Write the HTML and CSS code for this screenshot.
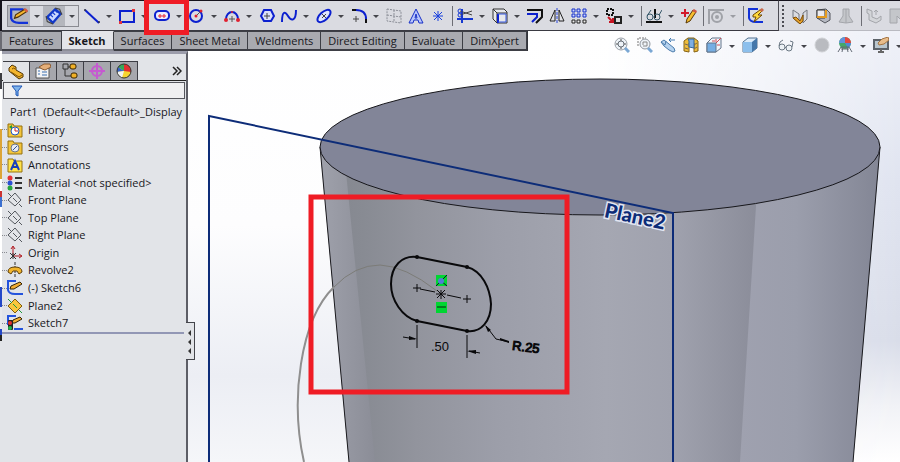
FILE: index.html
```html
<!DOCTYPE html>
<html lang="en">
<head>
<meta charset="utf-8">
<title>Part1 - Sketch</title>
<link rel="stylesheet" href="styles.css">
</head>
<body>
<div class="app">
<header class="toolbars">
<div class="toolbar main-tools" role="toolbar" aria-label="Sketch tools">
  <div class="pressed-group">
    <button class="tool pressed" aria-label="Exit sketch"><svg viewBox="0 0 16 16"><path d="M12 2H1v8q1 4 7 4h8" fill="none" stroke="#1232d8" stroke-width="2"/><path d="M4 10l1-3 8-5 2 2-8 5z" fill="#f6b62c" stroke="#4e3109"/><path d="M12 2l2-1 2 2-1 2z" fill="#d85b45"/></svg></button><button class="arrow" aria-label="Exit sketch options"></button>
    <button class="tool pressed" aria-label="Smart dimension"><svg viewBox="0 0 16 16"><path d="M2 9l7-7 5 4-7 8z" fill="#cbd8ff" stroke="#1238c8" stroke-width="2"/><path d="M5 7l2 2M7 5l2 2M9 3l2 2" stroke="#1238c8"/><path d="M1 8l1 5 5 2M9 1l4 1 2 5" fill="none" stroke="#444"/></svg></button><button class="arrow" aria-label="Dimension options"></button>
  </div>
  <button class="tool" aria-label="Line"><svg viewBox="0 0 16 16"><path d="M1 2l14 13" stroke="#0c20cf" stroke-width="2"/><circle cx="1" cy="2" r="1" fill="#334"/><circle cx="15" cy="14" r="1" fill="#334"/></svg></button><button class="arrow" aria-label="Line options"></button>
  <button class="tool" aria-label="Corner rectangle"><svg viewBox="0 0 16 16"><path d="M1 3h14v11H1z" fill="none" stroke="#0c20cf" stroke-width="2"/><path d="M0 13h3v3H0zM13 1h3v3h-3z" fill="#e5343c"/></svg></button><button class="arrow" aria-label="Rectangle options"></button>
  <div class="highlighted"><button class="tool" aria-label="Straight slot"><svg viewBox="0 0 16 16"><rect x="1" y="3" width="14" height="9" rx="4" fill="#eef" stroke="#0c20cf" stroke-width="2"/><path d="M5 7h2v2H5zM9 7h2v2H9z" fill="#fff" stroke="#e02030"/></svg></button><button class="arrow" aria-label="Slot options"></button></div>
  <button class="tool" aria-label="Circle"><svg viewBox="0 0 16 16"><circle cx="7" cy="8" r="6" fill="none" stroke="#0c20cf" stroke-width="2"/><path d="M7 8l4-4" stroke="#555"/><circle cx="7" cy="8" r="1.500" fill="#e02030"/><circle cx="12" cy="3" r="1.500" fill="#e02030"/></svg></button><button class="arrow" aria-label="Circle options"></button>
  <button class="tool" aria-label="Centerpoint arc"><svg viewBox="0 0 16 16"><path d="M2 11a6 7 0 0 1 12 0" fill="none" stroke="#0c20cf" stroke-width="2"/><path d="M8 8v6M5 11h6" stroke="#555"/><circle cx="2" cy="12" r="2" fill="#e02030"/><circle cx="14" cy="12" r="2" fill="#e02030"/><circle cx="8" cy="4" r="1" fill="#e02030"/></svg></button><button class="arrow" aria-label="Arc options"></button>
  <button class="tool" aria-label="Polygon"><svg viewBox="0 0 16 16"><path d="M5 2h7l3 6-3 5H5L2 8z" fill="#dbe1fb" stroke="#0c20cf" stroke-width="2"/><path d="M8 5v6M5 8h6" stroke="#444"/></svg></button>
  <button class="tool" aria-label="Spline"><svg viewBox="0 0 16 16"><path d="M1 14C1 3 4 3 7 8s8 6 8-6" fill="none" stroke="#0c20cf" stroke-width="2"/></svg></button><button class="arrow" aria-label="Spline options"></button>
  <button class="tool" aria-label="Ellipse"><svg viewBox="0 0 16 16"><ellipse cx="8" cy="8" rx="8" ry="4" transform="rotate(-42 8 8)" fill="#e1e6fb" stroke="#0c20cf" stroke-width="2"/><path d="M6 6l4 4M10 6l-4 4" stroke="#444"/></svg></button><button class="arrow" aria-label="Ellipse options"></button>
  <button class="tool" aria-label="Sketch fillet"><svg viewBox="0 0 16 16"><path d="M1 2h5M15 10v5" stroke="#111" stroke-width="2"/><path d="M5 2q10 0 10 9" fill="none" stroke="#0c20cf" stroke-width="2"/><path d="M5 8v6M2 11h6" stroke="#444"/></svg></button><button class="arrow" aria-label="Fillet options"></button>
  <button class="tool" aria-label="Plane"><svg viewBox="0 0 16 16"><path d="M1 1l14 2v12L1 13zM8 2v12M1 7l14 2" fill="none" stroke="#8c8f98" stroke-dasharray="2 1"/></svg></button>
  <button class="tool" aria-label="Text"><svg viewBox="0 0 16 16"><path d="M8 1L1 15h4l1-3h4l1 3h4zM8 6l1 4H7z" fill="#b9c6fb" stroke="#1730c8"/></svg></button>
  <button class="tool" aria-label="Point"><svg viewBox="0 0 16 16"><path d="M8 3v10M3 8h10M4 4l8 8M12 4l-8 8" stroke="#1940de"/></svg></button>
  <i class="sep"></i>
  <button class="tool" aria-label="Trim entities"><svg viewBox="0 0 16 16"><path d="M0 11h16M5 1v14" stroke="#1638d0" stroke-width="2"/><path d="M3 3l12 4M3 7l12-4" stroke="#444" stroke-width="1"/><circle cx="3" cy="3" r="2" fill="none" stroke="#1638d0"/><circle cx="3" cy="7" r="2" fill="none" stroke="#1638d0"/></svg></button><button class="arrow" aria-label="Trim options"></button>
  <button class="tool" aria-label="Convert entities"><svg viewBox="0 0 16 16"><path d="M1 1h11l3 3v11H5L1 11z" fill="#e7e8ec" stroke="#333"/><path d="M1 1l4 4h10M5 5v10" fill="none" stroke="#333"/><path d="M6 6v9" stroke="#0c20cf" stroke-width="2"/><path d="M6 6h8v8H6" fill="none" stroke="#3658e0"/></svg></button><button class="arrow" aria-label="Convert options"></button>
  <button class="tool" aria-label="Offset entities"><svg viewBox="0 0 16 16"><path d="M0 2h15v7l-6 6" fill="none" stroke="#111" stroke-width="2"/><path d="M0 6h10v3l-5 5" fill="none" stroke="#0c20cf" stroke-width="2"/></svg></button>
  <button class="tool" aria-label="Mirror entities"><svg viewBox="0 0 16 16"><path d="M6 2v11H1zM10 2v11h5z" fill="#e1e2e7" stroke="#222"/><path d="M8 0v16" stroke="#2844d8" stroke-dasharray="3 1"/></svg></button>
  <button class="tool" aria-label="Linear sketch pattern"><svg viewBox="0 0 16 16"><path d="M1 1h3v3H1zM6 1h3v3H6zM12 1h3v3h-3zM1 6h3v3H1zM6 6h3v3H6zM12 6h3v3h-3z" fill="#cbd5ff" stroke="#1730c8"/><path d="M1 12h3v3H1zM6 12h3v3H6zM12 12h3v3h-3z" fill="#eee" stroke="#222"/></svg></button><button class="arrow" aria-label="Pattern options"></button>
  <button class="tool" aria-label="Move entities"><svg viewBox="0 0 16 16"><path d="M1 1h6v6H1z" fill="none" stroke="#111" stroke-width="2" stroke-dasharray="2 1"/><path d="M9 9h6v6H9z" fill="#ddd" stroke="#222" stroke-width="2"/><path d="M2 9l4 4M3 14h4v-4" fill="none" stroke="#c71422" stroke-width="2"/></svg></button><button class="arrow" aria-label="Move options"></button>
  <i class="sep"></i>
  <button class="tool" aria-label="Display relations"><svg viewBox="0 0 16 16"><path d="M0 14h16M9 1v9" stroke="#111" stroke-width="2"/><circle cx="4" cy="9" r="3" fill="none" stroke="#345668"/><circle cx="11" cy="9" r="3" fill="none" stroke="#345668"/><path d="M1 8l4-6M13 7l3-5" stroke="#345668"/></svg></button><button class="arrow" aria-label="Relation options"></button>
  <button class="tool" aria-label="Repair sketch"><svg viewBox="0 0 16 16"><path d="M4 1v8M0 5h8" stroke="#d21a2a" stroke-width="2"/><path d="M5 15l1-4 6-9 3 2-6 9z" fill="#f6bd2e" stroke="#573706"/><path d="M11 3l2-2 3 2-1 2z" fill="#cf5945"/></svg></button>
  <i class="sep"></i>
  <button class="tool" aria-label="Quick snaps" disabled><svg viewBox="0 0 16 16"><path d="M0 2h16M1 1v15" stroke="#a0a2a8" stroke-width="2"/><circle cx="9" cy="9" r="5" fill="none" stroke="#a0a2a8" stroke-width="2"/><circle cx="9" cy="9" r="2" fill="#a0a2a8"/></svg></button><button class="arrow" aria-label="Snap options" disabled></button>
  <i class="sep"></i>
  <button class="tool" aria-label="Rapid sketch"><svg viewBox="0 0 16 16"><path d="M10 1H1v9q1 4 7 4h7" fill="none" stroke="#1232d8" stroke-width="2"/><path d="M5 7l7-5 2 1-4 4h4l-8 7 2-5H5z" fill="#ffd83b" stroke="#6f4700"/><path d="M11 2l3-2 2 2-2 2z" fill="#c86a4c"/></svg></button>
</div>
<div class="toolbar side-tools" role="toolbar" aria-label="Sheet metal tools">
  <i class="grip"></i>
  <button class="tool" aria-label="Base flange"><svg viewBox="0 0 16 16"><path d="M1 2l6 4v9L1 10zM11 5l4-3v9l-4 4z" fill="#d9dbe1" stroke="#73767e"/><path d="M1 10l3-1 4 4 3-6v6l-3 3z" fill="#e4a12b" stroke="#80500b"/></svg></button>
  <button class="tool" aria-label="Convert to sheet metal"><svg viewBox="0 0 16 16"><path d="M2 2l9-1 4 4v7l-5 3-8-5z" fill="#b6b9c2" stroke="#54575e"/><path d="M2 2h8v8H2z" fill="#ececf0" stroke="#333"/><path d="M2 9h9V2" fill="none" stroke="#e49c23" stroke-width="2"/></svg></button>
  <button class="tool" aria-label="Lofted bend" disabled><svg viewBox="0 0 16 16"><path d="M5 1h6v7l4 6-7 1-7-1 4-6zM8 1v14" fill="#c4c6ca" stroke="#a4a6ab"/></svg></button>
  <i class="sep"></i>
  <button class="tool" aria-label="Edge flange" disabled><svg viewBox="0 0 16 16"><path d="M1 1l5 2v6l5 2 4-3v4l-5 3-7-3V6L1 5z" fill="#d3d5d9" stroke="#a4a6ab"/><path d="M10 7V2M8 4l2-2 2 2" fill="none" stroke="#a4a6ab"/></svg></button>
  <button class="tool" aria-label="Miter flange" disabled><svg viewBox="0 0 16 16"><path d="M1 1h14v14L8 8v7H1z" fill="#c4c6ca" stroke="#a4a6ab"/></svg></button>
</div>
</header>

<div class="stage">
<main class="viewport">
<svg class="model" viewBox="0 31 900 431" preserveAspectRatio="xMinYMin slice" role="img" aria-label="Revolved part with slot sketch">
  <defs>
    <linearGradient id="sky" x1="0" y1="0" x2="0" y2="1"><stop offset="0" stop-color="#fff"/><stop offset=".45" stop-color="#fdfdfe"/><stop offset=".8" stop-color="#eceef4"/><stop offset="1" stop-color="#f5f6f9"/></linearGradient>
    <linearGradient id="haze" x1="0" y1="0" x2="0" y2="1"><stop offset="0" stop-color="#eff1f8"/><stop offset=".35" stop-color="#e0e4f0"/><stop offset=".72" stop-color="#d9dde9"/><stop offset=".87" stop-color="#f1f2f6"/><stop offset="1" stop-color="#fff"/></linearGradient>
    <linearGradient id="fade"><stop offset="0" stop-color="#000"/><stop offset="1" stop-color="#fff"/></linearGradient>
    <mask id="right"><rect x="600" y="31" width="300" height="431" fill="url(#fade)"/></mask>
    <linearGradient id="wall" gradientUnits="userSpaceOnUse" x1="320" y1="0" x2="760" y2="0"><stop offset="0" stop-color="#83868e"/><stop offset=".1" stop-color="#888b93"/><stop offset=".22" stop-color="#92949d"/><stop offset=".4" stop-color="#9c9ea9"/><stop offset=".65" stop-color="#a5a7b2"/><stop offset=".8" stop-color="#a0a2ae"/><stop offset="1" stop-color="#8a8c99"/></linearGradient>
    <linearGradient id="left" gradientUnits="userSpaceOnUse" x1="320" y1="0" x2="375" y2="0"><stop offset="0" stop-color="#9fa1ab"/><stop offset="1" stop-color="#8b8d97"/></linearGradient>
    <linearGradient id="facet" gradientUnits="userSpaceOnUse" x1="740" y1="0" x2="880" y2="0"><stop offset="0" stop-color="#9fa1af"/><stop offset=".4" stop-color="#9b9eac"/><stop offset="1" stop-color="#838695"/></linearGradient>
  </defs>
  <rect y="31" width="900" height="431" fill="url(#sky)"/>
  <rect x="600" y="31" width="300" height="431" fill="url(#haze)" mask="url(#right)"/>
  <path d="M320 147L349 462H853L880 147z" fill="url(#wall)"/>
  <path d="M320 147L349 462H375L346 172z" fill="url(#left)"/>
  <path d="M757 190L740 462H853L880 147z" fill="url(#facet)"/>
  <path d="M320 147L349 462M880 147L853 462" stroke="#1a1a1e"/>
  <ellipse cx="600" cy="147" rx="280" ry="68" fill="#828598" stroke="#17171b"/>
  <path d="M209 462V116L673 213V462" fill="none" stroke="#0d2c78" stroke-width="2"/>
  <path d="M304 462C290 400 300 320 334 287" fill="none" stroke="#8f8f8f" stroke-width="2"/>
  <path d="M334 287Q355 265 380 265Q405 266 437 291" fill="none" stroke="#7c7c78"/>
  <path d="M417 257L467 267C482 271 490 288 491 304C491 321 481 333 467 331L417 321C402 317 391 300 391 284C391 266 402 255 417 257z" fill="none" stroke="#09090b" stroke-width="2"/>
  <g fill="#09090b"><circle cx="417" cy="257" r="2"/><circle cx="467" cy="267" r="2"/><circle cx="417" cy="321" r="2"/><circle cx="467" cy="331" r="2"/></g>
  <path d="M413 288h8M417 284v8M463 299h8M467 295v8M420 289l15 3M447 295l14 3M441 290v9M436 294h10M437 290l8 8M445 290l-8 8M417 325v23M467 335v23M403 337l12 2M469 351l11 2M486 326l10 13 13 3" fill="none" stroke="#09090b"/>
  <path d="M417 339l-8-3v4zM467 351l9 3v-4zM485 325l3 7 3-2zM500 338l9 3v2l-9-3z" fill="#09090b"/>
  <rect x="436" y="275" width="11" height="11" fill="#00d632"/><path d="M436 286l11-11M440 280l7 6" stroke="#101426"/><circle cx="441" cy="281" r="3" fill="#527cd4"/>
  <rect x="436" y="302" width="11" height="11" fill="#00d632"/><path d="M437 307h9" stroke="#08220c"/>
  <text class="dim" x="431" y="351">.50</text>
  <text class="dim radius" transform="rotate(7 513 348)" x="512" y="350">R.25</text>
  <text class="plane-label" transform="rotate(12 604 215)" x="604" y="217">Plane2</text>
  <rect x="311" y="197" width="256" height="195" fill="none" stroke="#ef1c25" stroke-width="5"/>
</svg>
</main>

<nav class="tabs" aria-label="Command manager">
  <button>Features</button><button class="active">Sketch</button><button>Surfaces</button><button>Sheet Metal</button><button>Weldments</button><button>Direct Editing</button><button>Evaluate</button><button>DimXpert</button>
</nav>

<div class="hud" role="toolbar" aria-label="View tools">
  <button class="tool" aria-label="Zoom to fit"><svg viewBox="0 0 16 16"><circle cx="7" cy="7" r="6" fill="#eef3f8" stroke="#999fa7"/><circle cx="7" cy="7" r="3" fill="none" stroke="#676f78"/><path d="M7 2v2M7 10v2M2 7h2M10 7h2" stroke="#555"/><path d="M11 11l4 4" stroke="#7aa7d3" stroke-width="3"/></svg></button>
  <button class="tool" aria-label="Zoom to area"><svg viewBox="0 0 16 16"><path d="M1 9V1h8" fill="none" stroke="#777" stroke-dasharray="2 1"/><circle cx="8" cy="7" r="5" fill="#eef3f8" stroke="#91979f"/><path d="M6 8V5h4v4H6" fill="none" stroke="#888"/><path d="M11 11l4 4" stroke="#7aa7d3" stroke-width="3"/></svg></button>
  <button class="tool" aria-label="Previous view"><svg viewBox="0 0 16 16"><path d="M1 5l3-2 5 4 5 4 1 3-2 1-4-2-5-4z" fill="#b5d2ef" stroke="#4c7dac"/><path d="M1 5l4 3 1-4" fill="none" stroke="#4c7dac"/><path d="M15 3H9M11 1L9 3l2 2" fill="none" stroke="#4079b1" stroke-width="1"/></svg></button>
  <button class="tool" aria-label="Section view"><svg viewBox="0 0 16 16"><path d="M1 4l4-3h6l4 3v10l-4 1V6H6v9l-5-1z" fill="#edbc3b" stroke="#866315"/><path d="M5 2h6v9l-5-1V4z" fill="#7eaee2" stroke="#33669a"/><path d="M2 7l3 1M2 11l3 1M11 8l3-2M11 12l3-2" stroke="#765"/></svg></button>
  <button class="tool" aria-label="View orientation"><svg viewBox="0 0 16 16"><path d="M1 6l5-5h9v10l-5 4H1z" fill="#f0f6fb" stroke="#63758a"/><path d="M1 6h9v9H1z" fill="#76aee3" stroke="#63758a"/><path d="M10 6l5-5M6 4h3M11 8h3M10 2v3" stroke="#d04d55"/></svg></button><button class="arrow" aria-label="Orientation options"></button>
  <button class="tool" aria-label="Display style"><svg viewBox="0 0 16 16"><path d="M1 5l5-4h9v10l-5 4H1z" fill="#dcecfa" stroke="#52708e"/><path d="M1 5h9v10H1z" fill="#8cbfec"/><path d="M10 5l5-4v10l-5 4z" fill="#4477aa"/></svg></button><button class="arrow" aria-label="Style options"></button>
  <button class="tool" aria-label="Hide or show items"><svg viewBox="0 0 16 16"><circle cx="4" cy="10" r="3" fill="#edf2f6" stroke="#6b7884"/><circle cx="11" cy="11" r="3" fill="#edf2f6" stroke="#6b7884"/><path d="M1 9q0-5 4-6M7 10l1 1M14 10l1-5-3-1" fill="none" stroke="#6b7884"/></svg></button><button class="arrow" aria-label="Visibility options"></button>
  <button class="tool" aria-label="Edit appearance"><svg viewBox="0 0 16 16"><circle cx="8" cy="8" r="7" fill="#b9bbc0"/><circle cx="8" cy="8" r="7" fill="none" stroke="#cfd1d5"/></svg></button>
  <button class="tool" aria-label="Apply scene"><svg viewBox="0 0 16 16"><circle cx="8" cy="6" r="6" fill="#43a968"/><path d="M8 6V0a6 6 0 0 1 6 6z" fill="#e34742"/><path d="M8 6H2a6 6 0 0 1 6-6z" fill="#6490dc"/><path d="M8 6h6a6 6 0 0 1-3 5z" fill="#5587d5"/><path d="M1 15l3-5h8l3 5M4 12h8M6 10l-1 5M10 10l1 5" fill="none" stroke="#646b75"/></svg></button><button class="arrow" aria-label="Scene options"></button>
  <button class="tool" aria-label="View settings"><svg viewBox="0 0 16 16"><path d="M1 3h14v9H1z" fill="#b9c6ce" stroke="#5c6269" stroke-width="2"/><path d="M5 15h6M8 12v3" stroke="#666" stroke-width="2"/><path d="M5 6l4-4 6-2 1 3-5 4-5 1z" fill="#e8bd8b" stroke="#a47442"/></svg></button><button class="arrow" aria-label="View options"></button>
</div>

<aside class="panel">
  <div class="panel-tabs">
    <button class="active" aria-label="Feature tree"><svg viewBox="0 0 16 16"><path d="M1 4l3-3 4 2v3l7 4v3l-4 2-10-8z" fill="#f3b52d" stroke="#4f3504"/><path d="M4 5q2-2 3 0M3 8l8 5 3-2" fill="none" stroke="#7b5104"/></svg></button>
    <button aria-label="Properties"><svg viewBox="0 0 16 16"><path d="M1 5h13v10H1z" fill="#f2f3f5" stroke="#555"/><path d="M3 8h2M3 11h2M7 9h5M7 12h5" stroke="#3b6fae"/><path d="M4 4l5-3h6l1 3-6 3-3-1z" fill="#e4ae78" stroke="#8d5c32"/></svg></button>
    <button aria-label="Configurations"><svg viewBox="0 0 16 16"><path d="M1 1h5v5H1zM3 6v7h6M6 4h4" fill="none" stroke="#333"/><rect x="8" y="1" width="6" height="5" rx="2" fill="#efb027" stroke="#3a2602"/><rect x="9" y="10" width="6" height="5" rx="2" fill="#efb027" stroke="#3a2602"/></svg></button>
    <button aria-label="Dimensions"><svg viewBox="0 0 16 16"><circle cx="8" cy="8" r="5" fill="none" stroke="#c55ad0" stroke-width="2"/><path d="M8 0v16M0 8h16" stroke="#c55ad0" stroke-width="2"/></svg></button>
    <button aria-label="Display manager"><svg viewBox="0 0 16 16"><circle cx="8" cy="8" r="7" fill="#f6d430"/><path d="M8 8L2 4a7 7 0 0 1 6-3z" fill="#35a857"/><path d="M8 8V1a7 7 0 0 1 7 8z" fill="#e02e30"/><path d="M8 8l-7 1a7 7 0 0 1 1-5z" fill="#3462ce"/><path d="M8 8l-7 1a7 7 0 0 0 5 6z" fill="#f2f2f2"/><circle cx="8" cy="8" r="7" fill="none" stroke="#333"/></svg></button>
    <button class="more" aria-label="More panels"><svg viewBox="0 0 10 10"><path d="M1 1l4 4-4 4M5 1l4 4-4 4" fill="none" stroke="#222" stroke-width="1.500"/></svg></button>
  </div>
  <label class="filter"><svg viewBox="0 0 12 12"><path d="M1 1h10L7 6v5L5 10V6z" fill="#7fb4ec" stroke="#1d54b5"/></svg><input type="text" aria-label="Filter tree"></label>
  <div class="part">Part1&nbsp; (Default&lt;&lt;Default&gt;_Display</div>
  <ul class="tree">
    <li><svg viewBox="0 0 16 16"><path d="M1 2h5l1 2h8v11H1z" fill="#f4c53c" stroke="#94700e"/><circle cx="8" cy="9" r="4" fill="#fff" stroke="#2254c0"/><path d="M8 6v3h3" fill="none" stroke="#c22"/><path d="M2 5l3-2v4z" fill="#199b35"/></svg>History</li>
    <li><svg viewBox="0 0 16 16"><path d="M1 2h5l1 2h8v11H1z" fill="#f4c53c" stroke="#94700e"/><circle cx="8" cy="9" r="4" fill="#e6ebf4" stroke="#6c7481"/><path d="M6 11l4-4" stroke="#355797"/></svg>Sensors</li>
    <li><svg viewBox="0 0 16 16"><path d="M1 2h5l1 2h8v11H1z" fill="#ffe34b" stroke="#94700e"/><path d="M4 13l4-9 4 9M6 10h4" fill="none" stroke="#173fbd" stroke-width="2"/></svg>Annotations</li>
    <li><svg viewBox="0 0 16 16"><circle cx="3" cy="3" r="2.500" fill="#e23035"/><circle cx="3" cy="8" r="2.500" fill="#2b51d5"/><circle cx="3" cy="13" r="2.500" fill="#27a53e"/><path d="M8 3h7M8 8h7M8 13h7" stroke="#333" stroke-width="2"/></svg>Material &lt;not specified&gt;</li>
    <li><svg viewBox="0 0 16 16"><path d="M8 1l6 7-6 6-7-6zM1 1l3 3M12 12l3 3M6 6l4 4" fill="none" stroke="#55595f"/></svg>Front Plane</li>
    <li><svg viewBox="0 0 16 16"><path d="M8 1l6 7-6 6-7-6zM1 1l3 3M12 12l3 3M6 6l4 4" fill="none" stroke="#55595f"/></svg>Top Plane</li>
    <li><svg viewBox="0 0 16 16"><path d="M8 1l6 7-6 6-7-6zM1 1l3 3M12 12l3 3M6 6l4 4" fill="none" stroke="#55595f"/></svg>Right Plane</li>
    <li><svg viewBox="0 0 16 16"><path d="M6 11V2M4 4l2-3 2 3M6 11h8M12 9l3 2-3 2" fill="none" stroke="#b01820"/><path d="M3 8l6 6M9 8l-6 6M6 8v6" stroke="#333"/></svg>Origin</li>
    <li><svg viewBox="0 0 16 16"><path d="M8 0v16" stroke="#333" stroke-dasharray="3 1"/><path d="M1 10q0-5 7-5t7 5l-3 2-2-3H6l-2 3z" fill="#f2b42b" stroke="#60410a"/></svg>Revolve2</li>
    <li><svg viewBox="0 0 16 16"><path d="M9 1H1v9q1 4 7 4h8" fill="none" stroke="#2453dd" stroke-width="2"/><path d="M3 9l1-3 9-4 2 2-8 5z" fill="#f2ad32" stroke="#322105"/></svg>(-) Sketch6</li>
    <li><svg viewBox="0 0 16 16"><path d="M8 1l7 7-7 7-7-7z" fill="#f8c63d" stroke="#815c0b"/><path d="M1 1l4 4M12 12l3 3M6 6l4 4" stroke="#1f9b3c"/></svg>Plane2</li>
    <li><svg viewBox="0 0 16 16"><path d="M9 1H1v9M7 14h9" fill="none" stroke="#2453dd" stroke-width="2"/><path d="M5 8l1-3 7-3 2 2-7 4z" fill="#f2ad32" stroke="#322105"/><rect x="1" y="5" width="5" height="10" rx="1" fill="#222"/><circle cx="3" cy="8" r="2" fill="#e53030"/><circle cx="3" cy="13" r="2" fill="#20b44c"/></svg>Sketch7</li>
  </ul>
  <button class="splitter" aria-label="Collapse panel"><svg viewBox="0 0 6 36"><path d="M5 7v6L2 10zM5 16v6l-3-3zM5 25v6l-3-3z" fill="#333"/></svg></button>
</aside>
<i class="edge"></i>
</div>
</div>
</body>
</html>
```
FILE: styles.css
```css
* { box-sizing: border-box; }

body {
  margin: 0;
  font: 11px/16px "Open Sans", "Noto Sans", sans-serif;
  color: #17171c;
  background: #fff;
  overflow: hidden;
}

button {
  margin: 0;
  padding: 0;
  border: 0;
  background: none;
  font: inherit;
  color: inherit;
}

svg { display: block; }

.app {
  display: flex;
  flex-direction: column;
  height: 100vh;
}

/* Toolbars */
.toolbars {
  display: flex;
  height: 31px;
  position: relative;
  z-index: 2;
  padding-left: 2px;
  background: #15131c;
}

.toolbar {
  display: flex;
  align-items: center;
  background: #dadbe1;
  border-top: 1px solid #15131c;
}

.main-tools {
  flex: none;
  width: 777px;
  border-right: 1px solid #4c4c54;
  border-bottom: 1px solid #3a3a42;
}

.side-tools {
  flex: 1;
  overflow: hidden;
  padding-left: 3px;
  border-bottom: 1px solid #b9bac1;
}

.tool {
  flex: none;
  width: 16px;
  height: 16px;
  margin-right: 6px;
}

.tool svg {
  width: 16px;
  height: 16px;
}

.arrow {
  flex: none;
  width: 8px;
  height: 16px;
  margin: 0 6px 0 -1px;
}

.arrow::before {
  content: "";
  display: block;
  width: 0;
  margin: 2px auto 0;
  border: 3px solid transparent;
  border-top-color: #44454b;
  border-bottom: 0;
}

.arrow:disabled::before { border-top-color: #9b9da3; }

.pressed-group {
  display: flex;
  align-items: center;
  flex: none;
  height: 22px;
  width: 72px;
  margin: 0 5px 0 5px;
  border: 1px solid #8a8b92;
}

.pressed {
  display: grid;
  place-items: center;
  width: 22px;
  height: 20px;
  margin-right: 3px;
  background: #b4b6bd;
}

.pressed svg {
  width: 18px;
  height: 18px;
}

.pressed-group .arrow { margin: 0 2px 0 0; }

.highlighted {
  display: flex;
  position: relative;
}

.highlighted::after {
  content: "";
  position: absolute;
  inset: -9px 0 -11px -10px;
  border: 5px solid #ef1c25;
  pointer-events: none;
}

.sep {
  flex: none;
  width: 1px;
  height: 20px;
  margin: 0 4px 0 0;
  background: #6d6e75;
}

.grip {
  flex: none;
  height: 22px;
  margin-right: 8px;
  border-left: 2px dotted #4b4c53;
}

.side-tools .tool { margin-right: 7px; }

/* Stage */
.stage {
  flex: 1;
  min-height: 0;
  display: grid;
  grid-template: 20px minmax(0, 1fr) / 188px minmax(0, 1fr);
  overflow: hidden;
}

.viewport {
  grid-area: 1 / 1 / 3 / 3;
  min-height: 0;
  overflow: hidden;
}

.model {
  width: 100%;
  height: 100%;
}

.dim {
  font: 13px "Liberation Sans", sans-serif;
  fill: #09090b;
}

.radius {
  stroke: #09090b;
}

.plane-label {
  font: 900 20px Lato, sans-serif;
  fill: #0d2c78;
  stroke: #e3e7f2;
  stroke-width: 3px;
  paint-order: stroke;
}

.tabs {
  grid-area: 1 / 1 / 2 / 3;
  justify-self: start;
  position: relative;
  display: flex;
  margin-left: 2px;
  border-right: 1px solid #33343a;
}

.tabs button {
  padding: 0 7px;
  white-space: nowrap;
  background: #a9aab0;
  border: 1px solid #3d3e45;
  border-left-width: 0;
  border-bottom-width: 2px;
}

.tabs .active {
  background: #e3e4e9;
  border-top-color: #e3e4e9;
  border-bottom-color: #8c8d98;
  font-weight: bold;
}

.hud {
  grid-area: 1 / 1 / 3 / 3;
  align-self: start;
  justify-self: end;
  position: relative;
  display: flex;
  align-items: center;
  height: 18px;
  margin: 5px -9px 0 0;
}

.hud .tool { margin-right: 7px; }

/* Feature panel */
.panel {
  grid-area: 2 / 1 / 3 / 2;
  position: relative;
  margin-left: 2px;
  padding-top: 7px;
  border-top: 3px solid #9c9dab;
  border-right: 2px solid #5d5e66;
  background: #e2e4e8;
}

.panel-tabs {
  display: flex;
  align-items: stretch;
  height: 20px;
  padding-left: 1px;
  border-bottom: 1px solid #222;
}

.panel-tabs button {
  display: grid;
  place-items: center;
  width: 27px;
  background: #a6a7ad;
  border: 1px solid #3d3e45;
  border-width: 1px 1px 0 0;
}

.panel-tabs svg {
  width: 16px;
  height: 16px;
}

.panel-tabs .active {
  background: #e2e4e8;
  margin-bottom: -1px;
}

.panel-tabs .more {
  width: 18px;
  margin-left: auto;
  border: 0;
  background: none;
}

.panel-tabs .more svg {
  width: 10px;
  height: 10px;
}

.filter {
  display: flex;
  align-items: center;
  height: 17px;
  margin: 1px 1px 0 1px;
  padding-left: 7px;
  border: 1px solid #55565d;
  background: #efeff1;
}

.filter svg {
  flex: none;
  width: 12px;
  height: 12px;
}

.filter input {
  flex: 1;
  min-width: 0;
  height: 14px;
  border: 0;
  padding: 0 4px;
  background: none;
  font: inherit;
}

.part {
  margin-top: 5px;
  padding-left: 8px;
  overflow: hidden;
  white-space: nowrap;
}

.tree {
  display: grid;
  grid-auto-rows: 1fr;
  height: 213px;
  margin: 1px 2px 0 0;
  padding: 0;
  list-style: none;
  border-bottom: 2px solid #9297b5;
}

.tree li {
  display: flex;
  align-items: center;
  gap: 5px;
  white-space: nowrap;
}

.tree li::before {
  content: "";
  width: 5px;
  margin-right: -5px;
  border-top: 1px dotted #888a90;
}

.tree svg {
  flex: none;
  width: 16px;
  height: 16px;
}

.splitter {
  position: absolute;
  top: 268px;
  right: -9px;
  width: 9px;
  height: 38px;
  background: #e2e4e8;
  border: 1px solid #44454b;
  border-left: 0;
}

.splitter svg {
  width: 6px;
  height: 36px;
}

.edge {
  grid-area: 1 / 1 / 3 / 2;
  width: 2px;
  background: linear-gradient(#6b6b73 0 20px, #fff 20px 42px, #3b3b40 42px 58px, #fff 58px 98px, #dca437 98px 148px, #fff 148px 160px, #c33 160px 166px, #3a6fd0 166px 176px, #fff 176px 256px, #2448c8 256px 276px, #e8e9ec 276px 298px, #2448c8 298px 304px, #222 304px 310px, #e2e4e8 310px);
}
```
